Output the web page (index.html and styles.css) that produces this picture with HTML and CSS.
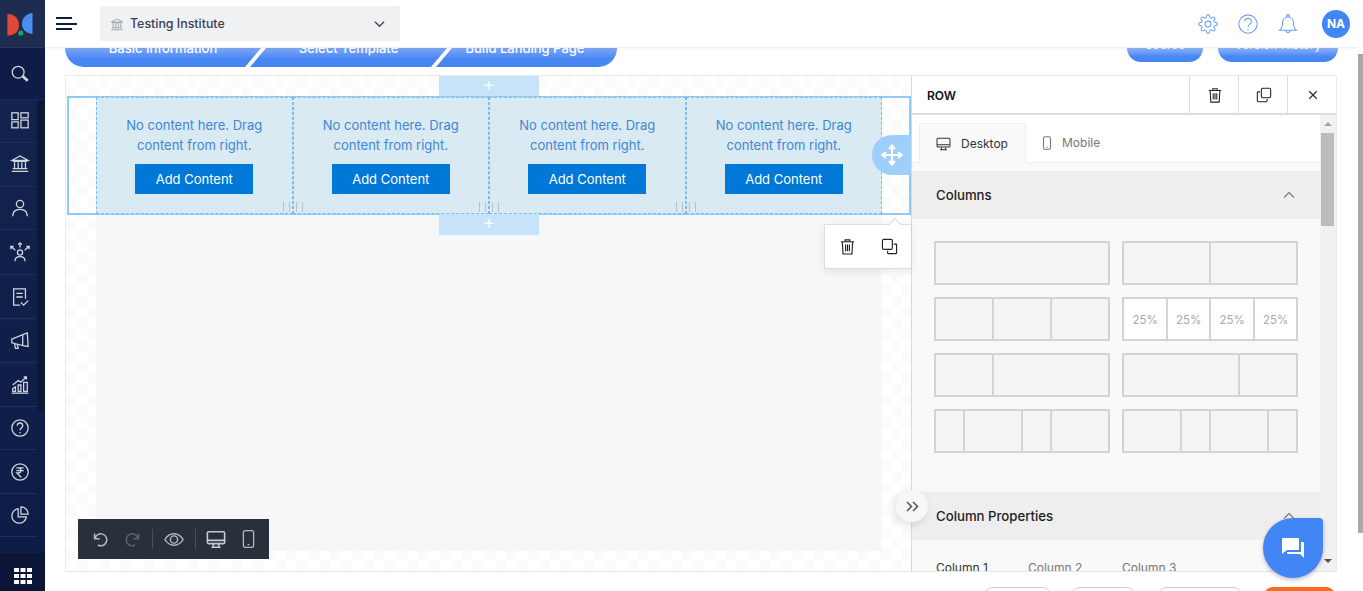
FILE: index.html
```html
<!DOCTYPE html>
<html lang="en">
<head>
<meta charset="utf-8">
<title>Build Landing Page</title>
<link rel="stylesheet" href="styles.css">
</head>
<body>
<div class="app">
  <aside class="sidebar">
    <div class="logo">
      <svg width="45" height="48" viewBox="0 0 45 48"><path d="M8 14c7 0 11 5 11 11s-4 10.500-11 10.500c-.4 0-.6-.2-.6-.6V14.600c0-.4.2-.6.6-.6z" fill="#e2473a"/><path d="M32 13c-6 1-10 5.500-10 11s4 9 10 10c.3 0 .5-.2.500-.5V13.500c0-.3-.2-.5-.5-.5z" fill="#4a8ef2"/><circle cx="20.800" cy="33" r="2.600" fill="#17a862"/></svg>
    </div>
    <nav class="nav">
      <div class="nav-search"><svg class="ni" viewBox="0 0 22 22"><circle cx="9" cy="9" r="6.500"/><path d="M14 13.500l5.500 5" stroke-width="3"/></svg></div>
      <div class="nav-list">
        <div class="nav-item h43"><svg class="ni" viewBox="0 0 22 22"><rect x="2" y="2" width="7" height="7.500"/><rect x="12" y="2" width="8" height="5.500"/><rect x="2" y="12" width="7" height="6.500"/><rect x="12" y="10" width="8" height="8.500"/></svg></div>
        <div class="nav-item h44"><svg class="ni" viewBox="0 2 22 22"><path d="M2 8l9-5 9 5zM3 9h16M5 10v7M9 10v7M13 10v7M17 10v7M3 17h16M2 20h18"/></svg></div>
        <div class="nav-item h43"><svg class="ni" viewBox="0 0 22 22"><circle cx="11" cy="6.500" r="4"/><path d="M3 20c0-5 3.500-7.500 8-7.500s8 2.500 8 7.500"/></svg></div>
        <div class="nav-item h45"><svg class="ni wide" viewBox="0 0 24 24"><circle cx="12" cy="12.500" r="2.800"/><path d="M6.500 22c0-3.500 2.500-5 5.500-5s5.500 1.500 5.500 5M12 7V2M10 4l2-2 2 2M7 10L2 6M2 9V6h3M17 10l5-4M19 6h3v3"/></svg></div>
        <div class="nav-item h44"><svg class="ni" viewBox="0 0 22 22"><path d="M11 20H4V2h13v11M7 7h7M7 11h7"/><path d="M12 17l3 3 5-5"/></svg></div>
        <div class="nav-item h44"><svg class="ni" viewBox="0 0 22 22"><path d="M2 9l12-5v12L2 13zM14 4l5-2 1 15-6-1M5 14l1 5h3l-1-4"/></svg></div>
        <div class="nav-item h44"><svg class="ni" viewBox="0 0 22 22"><path d="M2 20h18M3 18v-3l3-2v5zM9 18v-7h3v7zM15 18V8h4v10zM3 11l6-5 3 2 6-6M15 2h3v3"/></svg></div>
        <div class="nav-item h43"><svg class="ni" viewBox="0 0 22 22"><circle cx="11" cy="11" r="9"/><path d="M8 8.500c0-4 6-4 6 0 0 2.500-3 2.500-3 5M11 15.500v1.500"/></svg></div>
        <div class="nav-item h44"><svg class="ni" viewBox="0 0 22 22"><circle cx="11" cy="11" r="9"/><path d="M7 6.500h8M7 9.500h8M9 6.500c4 0 4 5.500 0 5.500H7.500l5 5"/></svg></div>
        <div class="nav-item h43"><svg class="ni" viewBox="0 0 22 22"><path d="M9 4a8 8 0 1 0 9 9H9z"/><path d="M12 2a8 8 0 0 1 8 8h-8z"/></svg></div>
      </div>
      <div class="nav-thumb"></div>
    </nav>
    <div class="apps">
      <svg width="18" height="16" viewBox="0 0 18 16"><path fill="#fff" d="M0 0h5v4H0zM6.500 0h5v4h-5zM13 0h5v4h-5zM0 6h5v4H0zM6.500 6h5v4h-5zM13 6h5v4h-5zM0 12h5v4H0zM6.500 12h5v4h-5zM13 12h5v4h-5z"/></svg>
    </div>
  </aside>

  <div class="main">
    <header class="topbar">
      <div class="burger"><span class="b1"></span><span class="b2"></span><span class="b3"></span></div>
      <div class="inst">
        <svg class="inst-ic" viewBox="0 0 22 22"><path d="M2 8l9-5 9 5zM3 9h16M5 10v7M9 10v7M13 10v7M17 10v7M3 17h16M2 20h18"/></svg>
        <span class="inst-name">Testing Institute</span>
        <svg class="inst-ch" viewBox="0 0 12 8"><path d="M1 1.500l5 5 5-5"/></svg>
      </div>
      <div class="top-actions">
        <svg class="ti" viewBox="0 0 24 24"><circle cx="12" cy="12" r="3.500"/><path d="M19.400 15a1.650 1.650 0 0 0 .33 1.820l.06.06a2 2 0 0 1 0 2.830 2 2 0 0 1-2.830 0l-.06-.06a1.650 1.650 0 0 0-1.820-.33 1.650 1.650 0 0 0-1 1.510V21a2 2 0 0 1-2 2 2 2 0 0 1-2-2v-.09A1.650 1.650 0 0 0 9 19.400a1.650 1.650 0 0 0-1.820.33l-.06.06a2 2 0 0 1-2.830 0 2 2 0 0 1 0-2.830l.06-.06a1.650 1.650 0 0 0 .33-1.820 1.650 1.650 0 0 0-1.510-1H3a2 2 0 0 1-2-2 2 2 0 0 1 2-2h.09A1.650 1.650 0 0 0 4.600 9a1.650 1.650 0 0 0-.33-1.820l-.06-.06a2 2 0 0 1 0-2.830 2 2 0 0 1 2.830 0l.06.06a1.650 1.650 0 0 0 1.820.33H9a1.650 1.650 0 0 0 1-1.510V3a2 2 0 0 1 2-2 2 2 0 0 1 2 2v.09a1.650 1.650 0 0 0 1 1.510 1.650 1.650 0 0 0 1.820-.33l.06-.06a2 2 0 0 1 2.830 0 2 2 0 0 1 0 2.830l-.06.06a1.650 1.650 0 0 0-.33 1.820V9a1.650 1.650 0 0 0 1.510 1H21a2 2 0 0 1 2 2 2 2 0 0 1-2 2h-.09a1.650 1.650 0 0 0-1.510 1z"/></svg>
        <svg class="ti" viewBox="0 0 24 24"><circle cx="12" cy="12" r="11"/><path d="M8 9c0-5 8-5 8 0 0 3.500-4 3.500-4 7M12 18v1.500"/></svg>
        <svg class="ti" viewBox="0 0 24 24"><path d="M12 3.500c-4.500 0-6.500 3.500-6.500 7 0 4.500-1 7-3.500 9h20c-2.500-2-3.500-4.500-3.500-9 0-3.500-2-7-6.500-7zM10.500 3.500V1h3v2.500M9.500 19.500c0 3.500 5 3.500 5 0"/></svg>
        <div class="avatar">NA</div>
      </div>
    </header>

    <div class="stepbar">
      <div class="steps">
        <div class="step s1"><span>Basic Information</span></div>
        <div class="step s2"><span>Select Template</span></div>
        <div class="step s3"><span>Build Landing Page</span></div>
      </div>
      <div class="step-actions">
        <div class="pill p1"><span>Source</span></div>
        <div class="pill p2"><span>Version History</span></div>
      </div>
    </div>

    <section class="builder">
      <div class="canvas">
        <div class="row">
          <div class="col"><p>No content here. Drag content from right.</p><button class="add">Add Content</button></div>
          <div class="col"><p>No content here. Drag content from right.</p><button class="add">Add Content</button></div>
          <div class="col"><p>No content here. Drag content from right.</p><button class="add">Add Content</button></div>
          <div class="col"><p>No content here. Drag content from right.</p><button class="add">Add Content</button></div>
        </div>
        <div class="page"></div>

        <div class="plus plus-top">+</div>
        <div class="plus plus-bot">+</div>
        <div class="handle">
          <svg width="22" height="22" viewBox="0 0 22 22"><path d="M11 2v18M2 11h18M8 5l3-3.500L14 5M8 17l3 3.500 3-3.500M5 8l-3.500 3L5 14M17 8l3.500 3-3.500 3" fill="none" stroke="#fff" stroke-width="2.200"/></svg>
        </div>
        <div class="popup">
          <svg class="pi" viewBox="0 0 18 18"><path d="M2 4h14M6.500 4V2h5v2M3.500 4l.8 13h9.400l.8-13M7 7v7M9 7v7M11 7v7"/></svg>
          <svg class="pi" viewBox="0 0 18 18"><rect x="1.500" y="1.500" width="10.500" height="10.500" rx="1.500"/><path d="M13.500 6.500h2.500a.5 .5 0 0 1 .5.500v8.500a1 1 0 0 1-1 1H7.500a.5 .5 0 0 1-.5-.5V13.500"/></svg>
        </div>
        <div class="tools">
          <svg class="tl" viewBox="0 0 20 20"><path d="M3 3v6h6M3.500 9A7 7 0 1 1 7 16.500"/></svg>
          <svg class="tl dim" viewBox="0 0 20 20"><path d="M17 3v6h-6M16.500 9A7 7 0 1 0 13 16.500"/></svg>
          <i class="sep"></i>
          <svg class="tl eye" viewBox="0 0 22 16"><path d="M1 8c5-8.500 15-8.500 20 0-5 8.500-15 8.500-20 0z"/><circle cx="11" cy="8" r="4"/></svg>
          <i class="sep"></i>
          <svg class="tl mon" viewBox="0 0 22 20"><rect x="1.500" y="1.500" width="19" height="13" rx="1.500"/><path d="M1.500 11h19M8 15v3M14 15v3M6 18.500h10"/></svg>
          <svg class="tl ph" viewBox="0 0 14 20"><rect x="1.500" y="1" width="11" height="18" rx="2"/><path d="M6 16h2"/></svg>
        </div>
        <div class="expand"><svg width="13" height="11" viewBox="0 0 13 11"><path d="M1 1l4.500 4.500L1 10M7 1l4.500 4.500L7 10" fill="none" stroke="#555" stroke-width="1.500"/></svg></div>
      </div>

      <div class="panel">
        <div class="panel-head">
          <strong class="panel-title">ROW</strong>
          <div class="ph-btn"><svg class="pi small" viewBox="0 0 18 18"><path d="M2 4h14M6.500 4V2h5v2M3.500 4l.8 13h9.400l.8-13M7 7v7M9 7v7M11 7v7"/></svg></div>
          <div class="ph-btn"><svg class="pi small" viewBox="0 0 18 18"><rect x="6" y="1.500" width="10.500" height="10.500" rx="1.500"/><path d="M4.500 5.500H2.500a1 1 0 0 0-1 1v9a1 1 0 0 0 1 1h9a1 1 0 0 0 1-1v-2"/></svg></div>
          <div class="ph-btn"><svg class="pi x" viewBox="0 0 12 12"><path d="M1.500 1.500l9 9M10.500 1.500l-9 9"/></svg></div>
        </div>
        <div class="panel-body">
          <div class="panel-scroll">
            <div class="tabs">
              <div class="tab on">
                <svg class="tab-ic" viewBox="0 0 22 20"><rect x="1.500" y="1.500" width="19" height="13" rx="1.500"/><path d="M1.500 11h19M8 15v3M14 15v3M6 18.500h10"/></svg>
                <span>Desktop</span>
              </div>
              <div class="tab off">
                <svg class="tab-ic ph2" viewBox="0 0 14 20"><rect x="2" y="1" width="10" height="18" rx="2"/><path d="M6 16h2"/></svg>
                <span>Mobile</span>
              </div>
            </div>
            <div class="acc"><span>Columns</span><svg class="acc-ch" viewBox="0 0 12 8"><path d="M1 6.500l5-5 5 5"/></svg></div>
            <div class="layouts">
              <div class="lay"><i></i></div>
              <div class="lay"><i></i><i></i></div>
              <div class="lay"><i></i><i></i><i></i></div>
              <div class="lay sel"><i>25%</i><i>25%</i><i>25%</i><i>25%</i></div>
              <div class="lay"><i></i><i class="g2"></i></div>
              <div class="lay"><i class="g2"></i><i></i></div>
              <div class="lay"><i></i><i class="g2"></i><i></i><i class="g2"></i></div>
              <div class="lay"><i class="g2"></i><i></i><i class="g2"></i><i></i></div>
            </div>
            <div class="acc acc2"><span>Column Properties</span><svg class="acc-ch" viewBox="0 0 12 8"><path d="M1 6.500l5-5 5 5"/></svg></div>
            <div class="subtabs"><span class="st act">Column 1</span><span class="st">Column 2</span><span class="st">Column 3</span></div>
          </div>
          <div class="sb">
            <i class="arrow up"></i>
            <i class="sb-thumb"></i>
            <i class="arrow down"></i>
          </div>
        </div>
      </div>
    </section>

    <footer class="foot">
      <div class="fb w69"></div>
      <div class="fb w66"></div>
      <div class="fb w86"></div>
      <div class="fb orange"></div>
    </footer>

    <div class="chat">
      <svg width="24" height="22" viewBox="0 0 24 22"><path fill="#fff" d="M2 1h15a1 1 0 0 1 1 1v10a1 1 0 0 1-1 1H6l-5 4V2a1 1 0 0 1 1-1z"/><path fill="#fff" d="M20 5h2a1 1 0 0 1 1 1v15l-4-4H7a1 1 0 0 1-1-1v-1h14z"/></svg>
    </div>
  </div>
  <div class="page-sb"><i></i></div>
</div>
</body>
</html>
```
FILE: styles.css
```css
* { box-sizing: border-box; }
html, body { margin: 0; height: 100%; overflow: hidden; }
body { font-family: Inter, "Noto Sans", sans-serif; background: #fff; color: #222; }
.app { display: flex; width: 1363px; height: 591px; }

/* sidebar */
.sidebar { width: 45px; flex: none; display: flex; flex-direction: column; background: #14234f; position: relative; overflow: hidden; }
.logo { height: 48px; background: #1e2c50; border-bottom: 1px solid #2a3859; flex: none; }
.logo svg { display: block; }
.nav { flex: 1; position: relative; background: linear-gradient(180deg, #14244e 0%, #0e1c48 100%); }
.nav-search { height: 52px; display: flex; align-items: center; justify-content: center; padding-right: 5px; background: #0e1c47; border-bottom: 1px solid #1c2a55; }
.nav-list { display: flex; flex-direction: column; margin-right: 8px; }
.nav-item { display: flex; align-items: center; justify-content: center; border-bottom: 1px solid #1f2e5a; padding-left: 3px; }
.h43 { height: 43px; }
.h44 { height: 44px; }
.h45 { height: 45px; }
.ni { width: 20px; height: 20px; fill: none; stroke: #d2d6df; stroke-width: 1.400; }
.ni.wide { width: 22px; height: 22px; }
.nav-thumb { position: absolute; right: 0; top: 52px; width: 8px; height: 311px; background: #0d1736; border-radius: 4px 0 0 4px; }
.apps { height: 38px; flex: none; background: #0b1636; display: flex; align-items: center; justify-content: center; padding-top: 8px; }

/* main */
.main { flex: 1; min-width: 0; display: flex; flex-direction: column; position: relative; overflow: hidden; }
.topbar { height: 48px; flex: none; display: flex; align-items: center; background: #fff; border-bottom: 1px solid #eceef1; box-shadow: 0 1px 3px rgba(0,0,0,.05); position: relative; z-index: 5; padding-left: 11px; }
.burger { width: 22px; display: flex; flex-direction: column; gap: 3.500px; margin-right: 22px; }
.burger span { display: block; height: 2px; background: #111c45; }
.b1 { width: 16px; }
.b2 { width: 21px; }
.b3 { width: 16px; }
.inst { width: 300px; height: 35px; background: #f0f1f3; border-radius: 2px; display: flex; align-items: center; padding: 0 15px 0 10px; }
.inst-ic { width: 14px; height: 14px; fill: none; stroke: #8d93a3; stroke-width: 1.200; margin-right: 6px; }
.inst-name { flex: 1; font-size: 12.400px; font-weight: 500; color: #3a4054; }
.inst-ch { width: 11px; height: 8px; fill: none; stroke: #3a4054; stroke-width: 1.300; }
.top-actions { margin-left: auto; display: flex; align-items: center; gap: 20px; padding-right: 8px; }
.ti { width: 20px; height: 20px; fill: none; stroke: #6ea2f5; stroke-width: 1.300; }
.avatar { width: 28px; height: 28px; border-radius: 50%; background: #4285f4; color: #fff; font-size: 12px; font-weight: 700; display: flex; align-items: center; justify-content: center; margin-left: 4px; }

/* stepper */
.stepbar { height: 27px; flex: none; display: flex; align-items: flex-start; padding-left: 20px; position: relative; }
.steps { width: 552px; height: 19px; display: flex; overflow: hidden; border-radius: 0 0 20px 20px; position: relative; }
.step { height: 19px; background: linear-gradient(180deg, #7fa9f6 0%, #4a87f5 55%, #4285f4 100%); color: #fff; font-size: 13px; font-weight: 500; display: flex; justify-content: center; align-items: flex-start; line-height: 0; }
.s1 { width: 196px; clip-path: polygon(0 0, 100% 0, calc(100% - 16px) 100%, 0 100%); }
.s2 { width: 197px; margin-left: -11px; clip-path: polygon(16px 0, 100% 0, calc(100% - 16px) 100%, 0 100%); }
.s3 { width: 181px; margin-left: -11px; padding-right: 3px; clip-path: polygon(16px 0, 100% 0, 100% 100%, 0 100%); }
.step-actions { position: absolute; right: 20px; top: 0; display: flex; gap: 15px; }
.pill { height: 14px; border-radius: 0 0 18px 18px; background: linear-gradient(180deg, #8fb5f7 0%, #4a87f5 60%, #4285f4 100%); color: #fff; font-size: 12px; line-height: 0; display: flex; justify-content: center; }
.pill span { margin-top: -3px; }
.p1 { width: 76px; }
.p2 { width: 120px; }

/* builder */
.builder { width: 1272px; height: 497px; margin-left: 20px; flex: none; display: flex; border: 1px solid #ececec; border-bottom-color: #e6e6e6; }
.canvas { width: 845px; flex: none; position: relative; background-color: #fff; background-image: conic-gradient(#fbfbfb 25%, #fff 0 50%, #fbfbfb 0 75%, #fff 0); background-size: 22px 22px; padding: 20px 0 0 1px; }
.row { width: 844px; height: 119px; border: 2px solid #92caf7; display: flex; padding-left: 27px; padding-right: 27px; }
.col { flex: 1 1 0; background: #d9eaf3; border: 1px dashed #78bcee; display: flex; flex-direction: column; align-items: center; position: relative; margin-top: -1px; margin-bottom: -1px; }
.col p { margin: 17px 0 0; width: 150px; font-size: 13px; line-height: 20px; color: #3f86d4; text-align: center; }
.add { margin-top: 9px; width: 118px; height: 30px; background: #0078d7; color: #fff; border: 0; padding: 0; font: 400 13px Inter, sans-serif; }
.col:not(:last-child)::after, .col + .col::before { content: ""; position: absolute; bottom: 1px; width: 5px; height: 10px; border-left: 1px solid #b4c2ca; border-right: 1px solid #b4c2ca; }
.col:not(:last-child)::after { right: 2px; }
.col + .col::before { left: 2px; }
.page { width: 786px; height: 336px; margin-left: 29px; background: #f6f7f9; }
.plus { position: absolute; left: 373px; width: 100px; background: #c7e3fa; color: #fff; text-align: center; font-size: 20px; line-height: 17px; font-weight: 300; }
.plus-top { top: 0; height: 20px; }
.plus-bot { top: 138px; height: 21px; }
.handle { position: absolute; left: 806px; top: 59px; width: 39px; height: 40px; border-radius: 20px 0 0 20px; background: #9dcffa; display: flex; align-items: center; padding-left: 9px; }
.popup { position: absolute; left: 758px; top: 148px; width: 87px; height: 45px; background: #fff; border: 1px solid #ddd; border-right: 0; box-shadow: 0 3px 8px rgba(0,0,0,.08); display: flex; align-items: center; gap: 25px; padding-left: 14px; }
.popup::before { content: ""; position: absolute; left: 65px; top: -5px; width: 9px; height: 9px; background: #fff; border: 1px solid #ddd; border-right: 0; border-bottom: 0; transform: rotate(45deg); }
.pi { width: 17px; height: 17px; fill: none; stroke: #222; stroke-width: 1.200; flex: none; }
.pi.small { width: 16px; height: 16px; }
.pi.x { width: 10px; height: 10px; stroke-width: 1.300; }
.tools { position: absolute; left: 12px; top: 443px; width: 191px; height: 40px; background: #2a303b; display: flex; align-items: center; padding-left: 14px; }
.tl { width: 17px; height: 17px; fill: none; stroke: #b5b9c0; stroke-width: 1.800; flex: none; margin-right: 15px; }
.tl.dim { stroke: #5d636d; margin-right: 11px; }
.tl.eye { width: 20px; height: 15px; margin-right: 11px; margin-left: 11px; stroke: #b5b9c0; stroke-width: 1.600; }
.tl.mon { width: 20px; height: 19px; margin-left: 10px; margin-right: 16px; stroke: #c5c8ce; }
.tl.ph { width: 13px; height: 20px; margin-right: 0; stroke-width: 1.400; }
.sep { width: 1px; height: 20px; background: #4a4f59; flex: none; }
.expand { position: absolute; left: 830px; top: 414px; width: 32px; height: 32px; border-radius: 50%; background: #f7f7f7; box-shadow: -2px 3px 8px rgba(0,0,0,.12); display: flex; align-items: center; justify-content: center; z-index: 2; }

/* panel */
.panel { flex: 1; min-width: 0; display: flex; flex-direction: column; border-left: 1px solid #d8d8d8; background: #fff; }
.panel-head { height: 39px; flex: none; display: flex; align-items: stretch; border-bottom: 2px solid #ddd; padding-left: 15px; }
.panel-title { flex: 1; font-size: 12px; font-weight: 600; color: #111; align-self: center; margin-top: 2px; }
.ph-btn { width: 49px; border-left: 1px solid #ddd; display: flex; align-items: center; justify-content: center; padding-left: 2px; }
.panel-body { flex: 1; min-height: 0; display: flex; }
.panel-scroll { flex: 1; min-width: 0; overflow: hidden; background: #f9f9f9; }
.tabs { height: 48px; background: #fff; display: flex; align-items: flex-end; padding-left: 7px; border-bottom: 1px solid #eee; }
.tab { height: 40px; display: flex; align-items: center; font-size: 12px; color: #333; }
.tab.on { width: 107px; background: #f9f9f9; border: 1px solid #eee; border-bottom: 0; padding-left: 16px; gap: 10px; margin-bottom: -1px; }
.tab.off { padding: 1px 0 0 16px; gap: 10px; color: #777; }
.tab-ic { width: 15px; height: 14px; fill: none; stroke: #333; stroke-width: 1.500; }
.tab-ic.ph2 { width: 10px; stroke: #777; }
.acc { height: 48px; margin-top: 8px; background: #eee; display: flex; align-items: center; justify-content: space-between; padding: 0 25px 0 24px; font-size: 13.200px; font-weight: 500; color: #222; }
.acc-ch { width: 12px; height: 8px; fill: none; stroke: #777; stroke-width: 1.100; }
.acc2 { margin-top: 0; }
.layouts { display: grid; grid-template-columns: 176px 176px; gap: 12px; padding: 22px 0 39px 22px; }
.lay { height: 44px; display: flex; gap: 2px; border: 2px solid #d3d3d3; background: #d3d3d3; }
.lay i { flex: 1 1 0; min-width: 0; background: #f4f4f4; font-style: normal; font-size: 11.500px; color: #a9a9a9; display: flex; align-items: center; justify-content: center; }
.lay i.g2 { flex: 2 1 2px; }
.lay.sel i { background: #fff; padding: 1px 0 0 1px; }
.subtabs { display: flex; padding: 20px 0 0 24px; font-size: 12px; line-height: 15px; color: #777; }
.st { width: 94px; }
.st.act { color: #333; width: 92px; }
.sb { width: 16px; flex: none; background: #f1f1f1; position: relative; }
.sb-thumb { position: absolute; left: 1px; top: 18px; width: 13px; height: 93px; background: #bcbcbc; }
.arrow { position: absolute; left: 4px; width: 0; height: 0; border-left: 4px solid transparent; border-right: 4px solid transparent; }
.arrow.up { top: 7px; border-bottom: 4px solid #a3a3a3; }
.arrow.down { bottom: 8px; border-top: 4px solid #505050; }

/* footer */
.foot { flex: 1; display: flex; align-items: flex-start; padding: 15px 0 0 938px; }
.fb { height: 20px; border: 1px solid #ccc; border-radius: 14px; background: #fff; flex: none; }
.w69 { width: 69px; margin-right: 18px; }
.w66 { width: 66px; margin-right: 21px; }
.w86 { width: 86px; margin-right: 20px; }
.orange { width: 73px; background: #ff6a1f; border-color: #ff6a1f; }

/* chat */
.chat { position: absolute; left: 1218px; top: 518px; width: 60px; height: 60px; border-radius: 50% 4px 50% 50%; background: #4285f4; box-shadow: 0 2px 4px rgba(0,0,0,.25); display: flex; align-items: center; justify-content: center; z-index: 6; }

/* page scrollbar */
.page-sb { width: 5px; flex: none; background: #fff; padding-top: 54px; }
.page-sb i { display: block; height: 479px; background: #a8a8a8; }
```
